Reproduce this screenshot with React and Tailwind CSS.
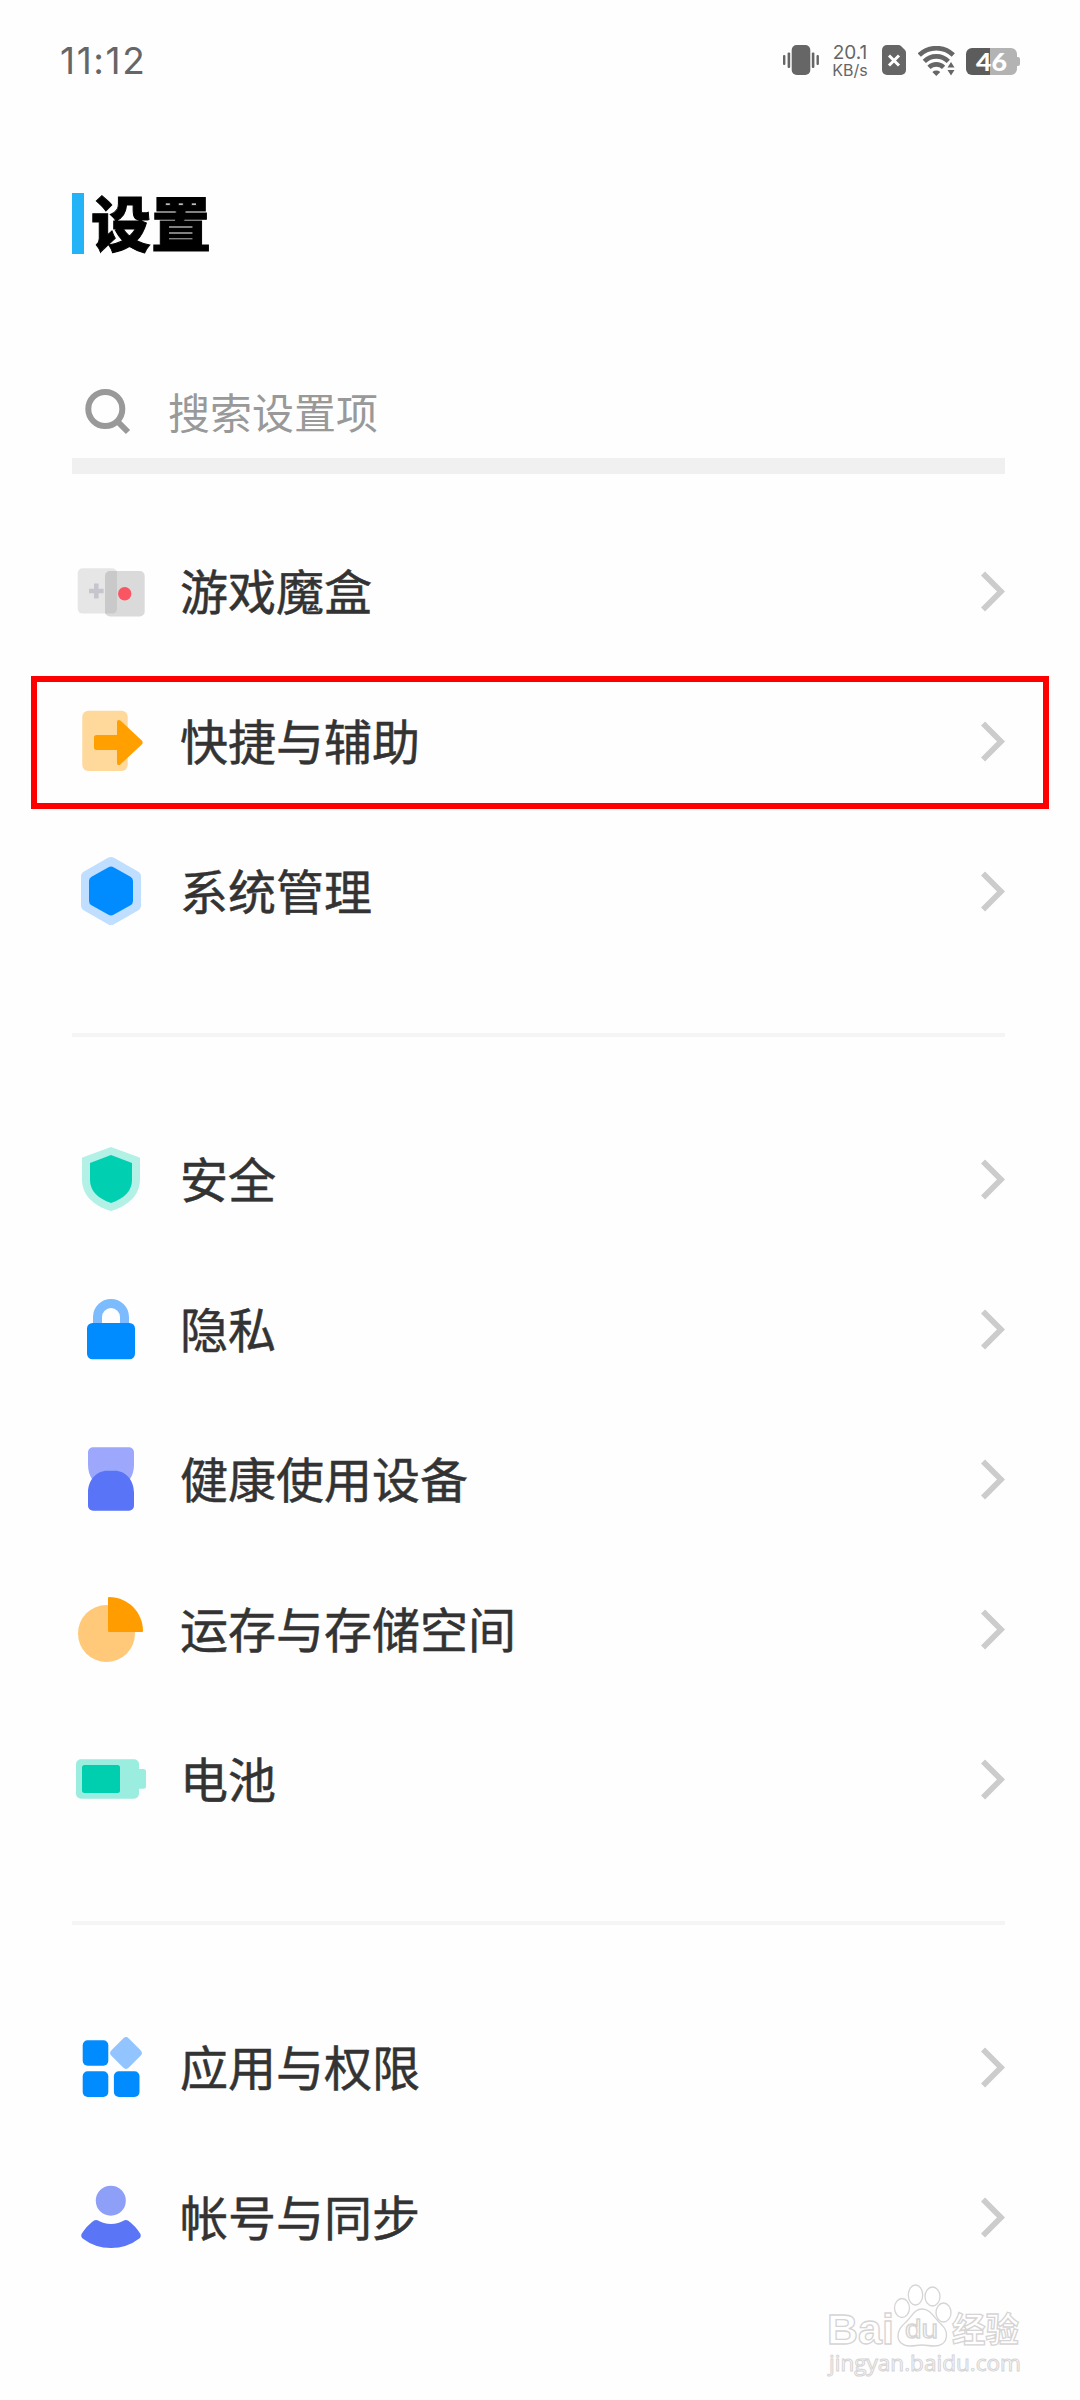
const GameIcon = () => (
  <>
    <rect x="5.7" y="16.3" width="39.3" height="45.3" rx="5" fill="#e6e6e6" />
    <rect x="33" y="19" width="39.7" height="45.5" rx="5" fill="#dadada" />
    <path d="M33 24a5 5 0 0 1 5-5h7v37.6a5 5 0 0 1-5 5h-7z" fill="#c9c9c9" />
    <path d="M22 31.5h4.6v5.2h5v4.6h-5v5.2H22v-5.2h-5v-4.6h5z" fill="#c5c5cd" />
    <circle cx="52.7" cy="41.7" r="6.7" fill="#fa5563" />
  </>
)

const ShortcutIcon = () => (
  <>
    <rect x="10.3" y="8.7" width="45.4" height="60.3" rx="6" fill="#ffd89b" />
    <path
      d="M24.5 33H45V20c0-2 2-2.8 3.4-1.4l21.4 20c1.2 1.1 1.2 2.7 0 3.8l-21.4 20C47 63.8 45 63 45 61V48H24.5a2.5 2.5 0 0 1-2.5-2.5v-10a2.5 2.5 0 0 1 2.5-2.5z"
      fill="#ff9f00"
    />
  </>
)

const SystemIcon = () => (
  <>
    <path d="M36 5.8a6 6 0 0 1 6 0l24 13.7a6 6 0 0 1 3 5.2v28.6a6 6 0 0 1-3 5.2L42 72.2a6 6 0 0 1-6 0L12 58.5a6 6 0 0 1-3-5.2V24.7a6 6 0 0 1 3-5.2z" fill="#c0deff" />
    <path d="M36.5 15.2a5 5 0 0 1 5 0l17 9.6a5 5 0 0 1 2.5 4.3v19.8a5 5 0 0 1-2.5 4.3l-17 9.6a5 5 0 0 1-5 0l-17-9.6a5 5 0 0 1-2.5-4.3V29.1a5 5 0 0 1 2.5-4.3z" fill="#008cff" />
  </>
)

const SecurityIcon = () => (
  <>
    <path d="M39 7l28 10.2q1 .3 1 1.3V39c0 16-11 26.5-29 32C21 65.5 10 55 10 39V18.5q0-1 1-1.3z" fill="#b3f1e7" />
    <path d="M39 15l21 8v17c0 11-8 18.5-21 23-13-4.5-21-12-21-23V23z" fill="#00d0b1" />
  </>
)

const PrivacyIcon = () => (
  <>
    <path d="M25.5 36V27a13.5 13.5 0 0 1 27 0v9" fill="none" stroke="#7dbbff" strokeWidth="9" />
    <rect x="15" y="33" width="48" height="36.3" rx="5.5" fill="#008cff" />
  </>
)

const HealthIcon = () => (
  <>
    <path d="M21 7.3h36a5 5 0 0 1 5 5V25q0 8-4.5 15h-37Q16 33 16 25V12.3a5 5 0 0 1 5-5z" fill="#9da8fd" />
    <path d="M16 52.5c0-13 9-21.8 19-21.8h8c10 0 19 8.8 19 21.8v13.2a5 5 0 0 1-5 5H21a5 5 0 0 1-5-5z" fill="#5a74f8" />
  </>
)

const StorageIcon = () => (
  <>
    <circle cx="34.5" cy="43.5" r="28.5" fill="#ffc979" />
    <path d="M36 8q0-1 1-1c19 0 34 15.5 34 34q0 1-1 1H37.5q-1.5 0-1.5-1.5z" fill="#ff9d00" />
  </>
)

const BatteryIcon = () => (
  <>
    <path d="M9 19.3h53a5 5 0 0 1 5 5V29h4.5a2.5 2.5 0 0 1 2.5 2.5v14.7a2.5 2.5 0 0 1-2.5 2.5H67v5a5 5 0 0 1-5 5H9a5 5 0 0 1-5-5V24.3a5 5 0 0 1 5-5z" fill="#9aeddf" />
    <rect x="10" y="25" width="38" height="28" rx="2.5" fill="#00cfaf" />
  </>
)

const AppsIcon = () => (
  <>
    <rect x="10.7" y="12.2" width="25.6" height="25.6" rx="5" fill="#008cff" />
    <rect x="10.7" y="43.3" width="25.6" height="25.6" rx="5" fill="#008cff" />
    <rect x="41.9" y="43.3" width="25.6" height="25.6" rx="5" fill="#008cff" />
    <rect x="41.7" y="12.7" width="24.6" height="24.6" rx="4" transform="rotate(45 54 25)" fill="#92c5ff" />
  </>
)

const AccountIcon = () => (
  <>
    <circle cx="38.8" cy="22.7" r="15" fill="#8e9ff8" />
    <path d="M22 42.5q1.8-1 3.5-.2 6 3.7 13.5 3.7t13.5-3.7q1.7-.8 3.5.2 7.5 5.5 12.3 13.3 1.3 2.7-1 4.7Q55 70 39 70T10.7 60.5q-2.3-2-1-4.7Q14.5 48 22 42.5z" fill="#5b75f7" />
  </>
)

const groups = [
  [
    { label: '游戏魔盒', icon: GameIcon },
    { label: '快捷与辅助', icon: ShortcutIcon, highlighted: true },
    { label: '系统管理', icon: SystemIcon },
  ],
  [
    { label: '安全', icon: SecurityIcon },
    { label: '隐私', icon: PrivacyIcon },
    { label: '健康使用设备', icon: HealthIcon },
    { label: '运存与存储空间', icon: StorageIcon },
    { label: '电池', icon: BatteryIcon },
  ],
  [
    { label: '应用与权限', icon: AppsIcon },
    { label: '帐号与同步', icon: AccountIcon },
  ],
]

const StatusBar = () => (
  <div className="flex h-[120px] items-center justify-between px-[60px] text-[#666]">
    <span className="font-['Inter',sans-serif] text-[37px] leading-none tracking-[1.6px]">11:12</span>
    <div className="flex items-center">
      <svg width="36" height="30" viewBox="0 0 36 30" fill="#666">
        <rect x="8.7" y="0" width="18.6" height="30" rx="5" />
        <rect x="0" y="10" width="2.4" height="10" rx="1" />
        <rect x="4.6" y="7.5" width="2.6" height="15.5" rx="1" />
        <rect x="28.8" y="7.5" width="2.6" height="15.5" rx="1" />
        <rect x="33.5" y="10" width="2.4" height="10" rx="1" />
      </svg>
      <div className="ml-[13px] flex w-9 flex-col items-center pt-px font-['Inter',sans-serif]">
        <span className="text-[19px] leading-[18px]">20.1</span>
        <span className="text-[16px] leading-[16px]">KB/s</span>
      </div>
      <svg className="ml-[14px]" width="24" height="30" viewBox="0 0 24 30">
        <path d="M5 0h11.5q1.5 0 2.5 1l4 4q1 1 1 2.5V25a5 5 0 0 1-5 5H5a5 5 0 0 1-5-5V5a5 5 0 0 1 5-5z" fill="#666" />
        <path d="M7 10.5l10 10M17 10.5l-10 10" stroke="#fff" strokeWidth="3" />
      </svg>
      <svg className="ml-3 mt-px" width="38" height="30" viewBox="0 0 38 30" fill="none" stroke="#666" strokeWidth="4.6">
        <path d="M1.3 9a24.5 24.5 0 0 1 34 0" />
        <path d="M6.3 15.3a17 17 0 0 1 24 0" />
        <path d="M11 21.3a10.5 10.5 0 0 1 14.6 0" />
        <path d="M14.3 26q4-2.8 8 0l-4 4z" fill="#666" stroke="none" />
        <path d="M29.5 21.5l3.500-5.500 3.500 5.500zM29.500 24h7l-3.500 5.500z" fill="#666" stroke="#fefefe" strokeWidth="1.5" paintOrder="stroke" />
      </svg>
      <svg className="ml-[10px] mt-[3px]" width="54" height="27" viewBox="0 0 54 27">
        <path d="M24 0h21a6 6 0 0 1 6 6v3h1q2 0 2 2v5q0 2-2 2h-1v3a6 6 0 0 1-6 6H24z" fill="#b3b3b3" />
        <path d="M6 0h18v27H6a6 6 0 0 1-6-6V6a6 6 0 0 1 6-6z" fill="#5c5c5c" />
        <text x="10" y="22.5" textLength="31" lengthAdjust="spacingAndGlyphs" fill="#fff" className="font-['Lato',sans-serif] text-[25px] font-black">46</text>
      </svg>
    </div>
  </div>
)

const SearchBar = () => (
  <div className="border-b-[16px] border-[#f0f0f0]">
    <div className="flex h-[98px] items-center pl-3 pt-[6px]">
      <svg width="48" height="48" viewBox="0 0 48 48" fill="none" stroke="#999" strokeWidth="6">
        <circle cx="21.3" cy="21" r="17" />
        <path d="M33 33l11 11" />
      </svg>
      <span className="ml-9 pb-[3px] text-[42px] leading-none text-[#999]">搜索设置项</span>
    </div>
  </div>
)

const SettingRow = ({ label, icon: Icon, highlighted }) => (
  <li className="relative flex h-[150px] items-center">
    <svg width="78" height="80" viewBox="0 0 78 80">
      <Icon />
    </svg>
    <span className="ml-[30px] flex-1 pb-[6px] text-[48px] leading-none text-[#333] [-webkit-text-stroke:0.5px_#333]">
      {label}
    </span>
    <svg width="24" height="42" viewBox="0 0 24 42" fill="none" stroke="#ccc" strokeWidth="5.8">
      <path d="M2 2.5l18 18-18 18" />
    </svg>
    {highlighted && (
      <div className="absolute -left-[41px] -right-[44px] top-[9px] h-[133px] border-[6px] border-[#ff0000]" />
    )}
  </li>
)

const Watermark = () => (
  <svg
    className="absolute bottom-0 right-[50px]"
    width="210"
    height="120"
    viewBox="820 2280 210 120"
    fill="#fff"
    stroke="#d6d4d4"
    strokeWidth="1.3"
  >
    <text x="827" y="2344" textLength="67" lengthAdjust="spacingAndGlyphs" className="font-['Liberation_Sans',sans-serif] text-[43px] font-bold">Bai</text>
    <ellipse cx="902" cy="2308" rx="7.5" ry="9.5" />
    <ellipse cx="915.5" cy="2295" rx="7.2" ry="10" />
    <ellipse cx="932.5" cy="2296.5" rx="7.5" ry="9.5" />
    <ellipse cx="943.5" cy="2312.5" rx="7.5" ry="9.5" />
    <path d="M922 2309c8 0 11 7 16 12 6 6 9 9 8.5 15-.5 7-6 10-12.5 10-5 0-7-1-12-1s-7 1-12 1c-7 0-12-4-12-10 0-7 4-10 9-15s8-12 15-12z" />
    <text x="905" y="2338" textLength="33" lengthAdjust="spacingAndGlyphs" className="font-['Liberation_Sans',sans-serif] text-[26px]">du</text>
    <text x="952" y="2342" textLength="67" lengthAdjust="spacingAndGlyphs" className="font-['Noto_Sans_CJK_SC',sans-serif] text-[34px] font-bold">经验</text>
    <text x="829" y="2371" textLength="192" lengthAdjust="spacingAndGlyphs" strokeWidth="1" className="font-['Open_Sans',sans-serif] text-[22px]">jingyan.baidu.com</text>
  </svg>
)

const App = () => {
  return (
    <div className="relative h-[2400px] w-[1080px] overflow-hidden bg-[#fefefe] font-['Noto_Sans_CJK_SC',sans-serif]">
      <StatusBar />

      <main className="pl-[72px] pr-[75px]">
        <div className="mt-[73px] flex h-[61px] items-center gap-[7px]">
          <div className="h-full w-3 bg-[#24b3f7]" />
          <h1 className="pb-[6px] text-[60px] font-black leading-none text-black [-webkit-text-stroke:1px_#000]">设置</h1>
        </div>

        <div className="mt-[106px]">
          <SearchBar />
        </div>

        <div className="mt-[43px]">
          {groups.map((items, index) => (
            <div key={index}>
              {index > 0 && <div className="mb-[68px] mt-[66px] h-1 bg-[#f5f5f5]" />}
              <ul>
                {items.map((item) => (
                  <SettingRow key={item.label} {...item} />
                ))}
              </ul>
            </div>
          ))}
        </div>
      </main>

      <Watermark />
    </div>
  )
}

export default App
